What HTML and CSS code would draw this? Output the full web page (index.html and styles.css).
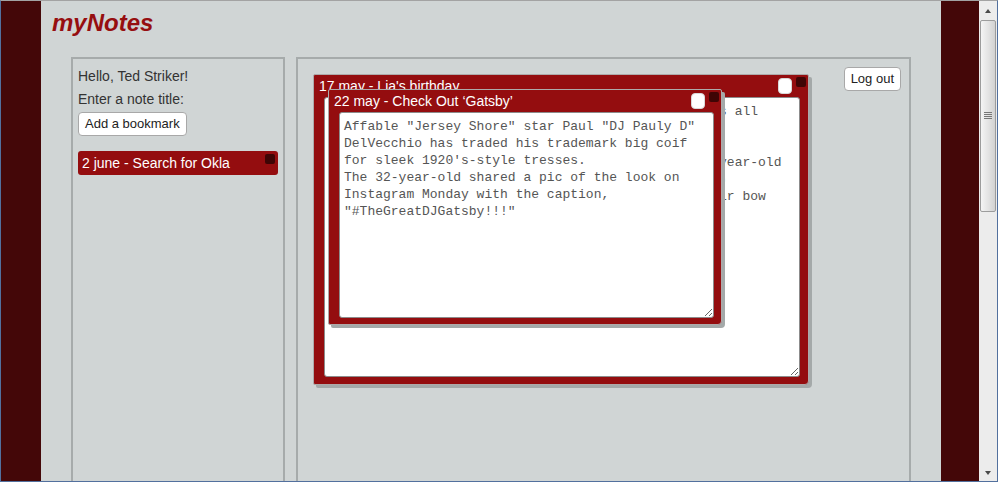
FILE: index.html
```html
<!DOCTYPE html>
<html lang="en">
<head>
<meta charset="utf-8">
<title>myNotes</title>
<link rel="stylesheet" href="styles.css">
</head>
<body>
<div class="window">
  <div class="side side-left"></div>
  <div class="main">
    <header class="header"><h1 class="logo">myNotes</h1></header>
    <div class="panels">
      <aside class="panel panel-left">
        <div class="greeting">Hello, Ted Striker!</div>
        <div class="prompt">Enter a note title:</div>
        <button class="btn btn-add" type="button">Add a bookmark</button>
        <div class="bookmark">
          <span class="bookmark-title">2 june - Search for Okla</span>
          <span class="close-box"></span>
        </div>
      </aside>
      <section class="panel panel-right">
        <button class="btn btn-logout" type="button">Log out</button>
        <div class="note note-lia">
          <div class="note-title">17 may - Lia's birthday</div>
          <span class="note-check"></span>
          <span class="close-box note-close"></span>
          <textarea class="note-text note-text-lia">Lia turns 6 on Saturday! Party at 3 pm, her friends all
are coming, so don't forget to order the cake.
Gift ideas:
- a red bike or a few fun picture books for a six-year-old
- a pretty dress (ask Mom what size she would need)
- hair clips, ribbons and a big shiny red satin hair bow</textarea>
        </div>
        <div class="note note-gatsby">
          <div class="note-title">22 may - Check Out ‘Gatsby’</div>
          <span class="note-check"></span>
          <span class="close-box note-close"></span>
          <textarea class="note-text note-text-gatsby">Affable "Jersey Shore" star Paul "DJ Pauly D"
DelVecchio has traded his trademark big coif
for sleek 1920's-style tresses.
The 32-year-old shared a pic of the look on
Instagram Monday with the caption,
"#TheGreatDJGatsby!!!"</textarea>
        </div>
      </section>
    </div>
  </div>
  <div class="side side-right"></div>
  <div class="scrollbar">
    <div class="sb-arrow"><span class="tri-up"></span></div>
    <div class="sb-thumb"><span class="sb-grip"></span></div>
    <div class="sb-track"></div>
    <div class="sb-arrow sb-arrow-down"><span class="tri-down"></span></div>
  </div>
</div>
</body>
</html>
```

FILE: styles.css
```css
html, body {
  margin: 0;
  padding: 0;
  overflow: hidden;
}

body {
  font-family: "Liberation Sans", Arial, sans-serif;
  background: #d0d5d5;
}

.window {
  width: 998px;
  height: 482px;
  box-sizing: border-box;
  border-top: 1px solid #a3a3a3;
  border-left: 1px solid #52709e;
  border-right: 1px solid #52709e;
  border-bottom: 1px solid #52709e;
  display: flex;
  overflow: hidden;
}

.side {
  background: #440708;
  flex: none;
}

.side-left { width: 40px; }
.side-right { width: 38px; }

.main {
  width: 900px;
  flex: none;
  background: #d0d5d5;
  display: flex;
  flex-direction: column;
  overflow: hidden;
}

.header {
  height: 56px;
  box-sizing: border-box;
  padding: 8px 0 0 11px;
  flex: none;
}

.logo {
  margin: 0;
  font-size: 24px;
  line-height: 28px;
  font-weight: bold;
  font-style: italic;
  color: #960e10;
}

.panels {
  flex: 1;
  min-height: 0;
  display: flex;
  align-items: flex-start;
  gap: 11px;
  padding: 0 30px;
}

.panel {
  box-sizing: border-box;
  height: 450px;
  border: 2px solid #a6abab;
  flex: none;
}

.panel-left {
  width: 214px;
  padding: 9px 5px;
  color: #333;
  font-size: 14px;
}

.greeting {
  line-height: 16px;
  margin-bottom: 7px;
}

.prompt {
  line-height: 16px;
}

.btn {
  display: block;
  height: 24px;
  box-sizing: border-box;
  padding: 0 6px;
  background: #fff;
  border: 1px solid #a8a8a8;
  border-radius: 4px;
  font-family: "Liberation Sans", Arial, sans-serif;
  font-size: 13px;
  color: #222;
  line-height: 22px;
}

.btn-add {
  margin-top: 5px;
}

.bookmark {
  position: relative;
  margin-top: 15px;
  height: 24px;
  background: #940d0f;
  border-radius: 3px;
  color: #fff;
  line-height: 24px;
  padding-left: 4px;
}

.close-box {
  position: absolute;
  width: 10px;
  height: 10px;
  background: #3f0505;
  border-radius: 2px;
}

.bookmark .close-box {
  top: 3px;
  right: 3px;
}

.panel-right {
  width: 615px;
  position: relative;
  padding: 8px;
  display: flex;
  justify-content: flex-end;
  align-items: flex-start;
}

.note {
  position: absolute;
  box-sizing: border-box;
  background: #940d0f;
  border: 1px solid #aeaaaa;
  border-radius: 2px 2px 4px 2px;
  box-shadow: 3px 3px 0 #a4a9a9;
  padding: 0 7px 6px 0;
}

.note-lia {
  left: 15px;
  top: 15px;
  width: 496px;
  height: 311px;
}

.note-gatsby {
  left: 30px;
  top: 30px;
  width: 394px;
  height: 236px;
}

.note-title {
  box-sizing: border-box;
  height: 22px;
  padding: 1px 0 0 5px;
  line-height: 21px;
  font-size: 14px;
  color: #fff;
  white-space: nowrap;
}

.note-check {
  position: absolute;
  top: 3px;
  right: 16px;
  width: 14px;
  height: 16px;
  box-sizing: border-box;
  background: #fff;
  border: 1px solid #d8d8d8;
  border-radius: 4px;
}

.note-close {
  top: 2px;
  right: 2px;
}

.note-text {
  display: block;
  box-sizing: border-box;
  margin: 0 0 0 10px;
  padding: 5px 4px;
  background: #fff;
  border: 1px solid #8c8c8c;
  border-radius: 3px;
  font-family: "Liberation Mono", "Courier New", monospace;
  font-size: 13px;
  line-height: 17px;
  color: #555;
  white-space: pre;
  overflow: hidden;
  resize: both;
  outline: none;
}

.note-text-lia {
  width: 476px;
  height: 280px;
}

.note-text-gatsby {
  width: 375px;
  height: 206px;
}

.scrollbar {
  width: 18px;
  flex: none;
  background: #ececec;
  display: flex;
  flex-direction: column;
}

.sb-arrow {
  height: 19px;
  flex: none;
  display: flex;
  justify-content: center;
  align-items: center;
}

.sb-arrow-down {
  height: 17px;
}

.tri-up,
.tri-down {
  width: 0;
  height: 0;
  border-left: 3px solid transparent;
  border-right: 3px solid transparent;
}

.tri-up { border-bottom: 4px solid #4a4a4a; }
.tri-down { border-top: 4px solid #4a4a4a; }

.sb-thumb {
  flex: none;
  height: 192px;
  margin: 0 1px;
  box-sizing: border-box;
  border: 1px solid #9c9c9c;
  border-radius: 2px;
  background: linear-gradient(to right, #f4f4f4, #e2e2e2 55%, #d2d2d2);
  display: flex;
  justify-content: center;
  align-items: center;
}

.sb-grip {
  width: 8px;
  height: 8px;
  background: repeating-linear-gradient(to bottom, #777 0, #777 1px, transparent 1px, transparent 2px);
}

.sb-track {
  flex: 1;
}
```
